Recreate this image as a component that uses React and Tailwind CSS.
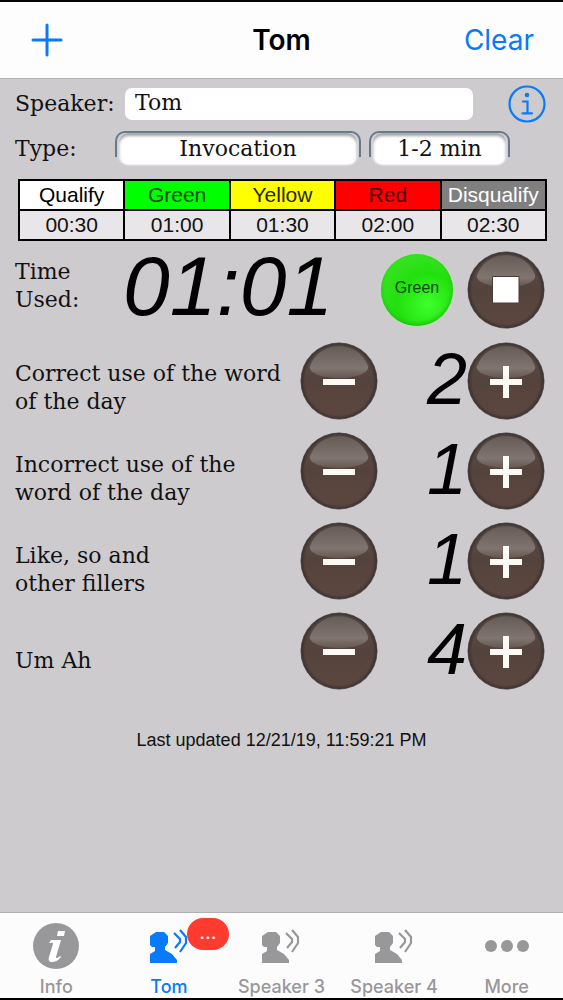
import { useState } from "react";

const limits = [
  { name: "Qualify", time: "00:30", cls: "bg-white text-black" },
  { name: "Green", time: "01:00", cls: "bg-[#00ff00] text-[#0a4a0a]" },
  { name: "Yellow", time: "01:30", cls: "bg-[#ffff00] text-[#26260a]" },
  { name: "Red", time: "02:00", cls: "bg-[#ff0000] text-[#4a0505]" },
  { name: "Disqualify", time: "02:30", cls: "bg-[#7f7f7f] text-white" },
];

const counters = [
  { id: "correct", label: ["Correct use of the word", "of the day"], start: 2 },
  { id: "incorrect", label: ["Incorrect use of the", "word of the day"], start: 1 },
  { id: "fillers", label: ["Like, so and", "other fillers"], start: 1 },
  { id: "umah", label: ["Um Ah"], start: 4 },
];

function GlossyButton({ icon, label, onClick }) {
  return (
    <button type="button" aria-label={label} onClick={onClick} className="block size-[78px] shrink-0">
      <svg viewBox="0 0 78 78" className="size-full">
        <defs>
          <linearGradient id="ball" x1="0" y1="0" x2="0" y2="1">
            <stop offset="0" stopColor="#5a4e48" />
            <stop offset="0.5" stopColor="#54433c" />
            <stop offset="1" stopColor="#5c4740" />
          </linearGradient>
          <linearGradient id="shine" x1="0" y1="0" x2="0" y2="1">
            <stop offset="0" stopColor="#fff" stopOpacity="0.08" />
            <stop offset="0.7" stopColor="#fff" stopOpacity="0.25" />
            <stop offset="1" stopColor="#fff" stopOpacity="0.1" />
          </linearGradient>
          <radialGradient id="rim">
            <stop offset="0.88" stopColor="#2e2828" stopOpacity="0" />
            <stop offset="1" stopColor="#2e2828" stopOpacity="0.8" />
          </radialGradient>
        </defs>
        <circle cx="39" cy="39" r="38" fill="url(#ball)" />
        <path d="M10 24C15 11 26 4 39 4s24 7 29 20c2 7-12 12-29 12S8 31 10 24z" fill="url(#shine)" />
        <circle cx="39" cy="39" r="38.5" fill="url(#rim)" />
        {icon === "stop" && <path d="M25.500 25.500h26.500v26.500h-26.500z" fill="#fff" stroke="#4a3b35" strokeWidth="1" />}
        {icon === "minus" && <path d="M23 40h32" stroke="#fdf9f4" strokeWidth="6" />}
        {icon === "plus" && <path d="M23 40h32M39 24v32" stroke="#fdf9f4" strokeWidth="6" />}
      </svg>
    </button>
  );
}

function PickerField({ id, label, value, className }) {
  return (
    <div className={`h-[26px] rounded-t-[10px] border-2 border-b-0 border-[#66788a] px-[2px] ${className}`}>
      <select
        id={id}
        aria-label={label}
        defaultValue={value}
        className="block h-[31px] w-full appearance-none rounded-[9px] bg-white text-center [text-align-last:center] shadow-[inset_0_3px_3px_#a5a5a8,0_1px_2px_#ffffff]"
      >
        <option>{value}</option>
      </select>
    </div>
  );
}

function SpeakerIcon() {
  return (
    <svg viewBox="0 0 40 36" className="h-[36px] w-[40px]" fill="currentColor">
      <path d="M7 4h8l4 4v7l-3 4v3l7 4 5 6v3H1V26l5-3v-4H3l-2-2V8z" />
      <path d="M25 5l6 6v3l-5 6M31 2l6 7v6l-6 9" fill="none" stroke="currentColor" strokeWidth="2.200" />
    </svg>
  );
}

function Tab({ label, active, badge, children }) {
  return (
    <button
      type="button"
      className={`flex min-w-0 flex-1 flex-col items-center ${active ? "text-[#087afa]" : "text-[#98979a]"}`}
    >
      <span className="relative flex h-[66px] items-center">
        {children}
        {badge && (
          <span className="absolute top-[5px] left-[38px] flex h-8 w-[42px] items-center justify-center rounded-full bg-[#ff3b30] pb-1 text-xl text-white">
            {badge}
          </span>
        )}
      </span>
      <span className="text-lg leading-4 font-medium">{label}</span>
    </button>
  );
}

export default function App() {
  const [counts, setCounts] = useState(counters.map((c) => c.start));

  const step = (index, by) =>
    setCounts(counts.map((n, i) => (i === index ? Math.max(0, n + by) : n)));

  return (
    <div className="flex min-h-screen flex-col border-y-2 border-t-[#050505] border-b-black bg-[#cecbcf] font-['DejaVu_Serif',serif] text-[22px] leading-7 text-[#111]">
      <header className="grid h-[77px] grid-cols-3 items-center border-b border-[#b5b3b6] bg-[#fefdfe] px-[29px] font-['Inter',sans-serif] text-[28px]">
        <button type="button" aria-label="Add speaker" className="justify-self-start text-[#087afa]">
          <svg viewBox="0 0 36 36" className="size-9" stroke="currentColor" strokeWidth="3" strokeLinecap="round">
            <path d="M4 18h28M18 3v30" />
          </svg>
        </button>
        <h1 className="text-center font-semibold text-black">Tom</h1>
        <button type="button" className="justify-self-end text-[#087afa]">Clear</button>
      </header>

      <main className="flex-1">
        <div className="mt-[6px] flex h-[38px] items-center pr-[17px] pl-[15px]">
          <label htmlFor="speaker" className="w-[110px] shrink-0">Speaker:</label>
          <input id="speaker" defaultValue="Tom" className="h-8 min-w-0 flex-1 rounded-[7px] bg-white px-[10px] pb-1" />
          <button type="button" aria-label="Speaker info" className="ml-[35px] shrink-0 text-[#087afa]">
            <svg viewBox="0 0 38 38" className="size-[38px]" fill="none" stroke="currentColor" strokeWidth="2.2">
              <circle cx="19" cy="19" r="17.5" />
              <path d="M15 16.500h4.500V28M14.500 28.300h9.500" strokeLinecap="round" />
              <circle cx="19" cy="10" r="2.3" fill="currentColor" stroke="none" />
            </svg>
          </button>
        </div>

        <div className="mt-2 flex h-[33px] items-start pr-[53px] pl-[15px]">
          <label htmlFor="type" className="w-[100px] shrink-0 pt-1">Type:</label>
          <PickerField id="type" label="Type" value="Invocation" className="mr-2 min-w-0 flex-1" />
          <PickerField id="duration" label="Duration" value="1-2 min" className="w-[141px]" />
        </div>

        <div className="mt-[15px] pr-4 pl-[18px] font-['Liberation_Sans',sans-serif] text-[21px]">
          <table className="w-full table-fixed border-collapse text-center">
            <thead>
              <tr>
                {limits.map((l) => (
                  <th key={l.name} className={`h-[30px] border-2 border-black p-0 font-normal ${l.cls}`}>{l.name}</th>
                ))}
              </tr>
            </thead>
            <tbody>
              <tr>
                {limits.map((l) => (
                  <td key={l.name} className="h-[30px] border-2 border-black bg-[#e8e6e8] p-0">{l.time}</td>
                ))}
              </tr>
            </tbody>
          </table>
        </div>

        <div className="mt-[10px] flex h-[78px] items-center pr-[18px] pl-[15px]">
          <div className="w-[108px] shrink-0 pb-2">Time<br />Used:</div>
          <output className="flex-1 pb-2 font-['Liberation_Sans',sans-serif] text-[84px] leading-[72px] text-black italic">
            01:01
          </output>
          <div className="mr-[14px] flex size-[72px] shrink-0 items-center justify-center rounded-full bg-[radial-gradient(circle_at_65%_70%,#3dff2a,#22e00d_45%,#37e222_75%,#55f040)] pb-1 font-['Liberation_Sans',sans-serif] text-base text-[#0a4a0a] shadow-[0_0_3px_#b8e0b2,inset_0_-2px_4px_#19c40a]">
            Green
          </div>
          <GlossyButton icon="stop" label="Stop timer" />
        </div>

        <div className="mt-[13px] flex pr-[18px] pl-[15px]">
          <div className="min-w-0 flex-1">
            {counters.map((c) => (
              <div key={c.id} id={c.id} className="flex h-[91px] flex-col justify-center whitespace-nowrap">
                {c.label.map((line) => (
                  <span key={line}>{line}</span>
                ))}
              </div>
            ))}
          </div>
          <div className="flex flex-col gap-3">
            {counters.map((c, i) => (
              <div key={c.id} role="group" aria-labelledby={c.id} className="flex items-center">
                <GlossyButton icon="minus" label="Decrease" onClick={() => step(i, -1)} />
                <output className="w-[89px] pb-1 text-right font-['Liberation_Sans',sans-serif] text-7xl leading-[72px] text-black italic">
                  {counts[i]}
                </output>
                <GlossyButton icon="plus" label="Increase" onClick={() => step(i, 1)} />
              </div>
            ))}
          </div>
        </div>

        <p className="mt-5 text-center font-['Liberation_Sans',sans-serif] text-[18px]">
          Last updated 12/21/19, 11:59:21 PM
        </p>
      </main>

      <nav className="flex h-[86px] border-t border-[#b0aeb1] bg-[#fdfcfd] font-['Inter',sans-serif]">
        <Tab label="Info">
          <svg viewBox="0 0 46 46" className="size-[46px]">
            <circle cx="23" cy="23" r="23" fill="#98979a" />
            <path d="M25 8h7l-1 5h-7z" fill="#fff" />
            <path d="M18 17h10l-5 17c0 2 2 1 4-1l1 1c-3 4-6 5-9 5-3 0-4-2-3-5l4-13c0-2-2-1-4-1z" fill="#fff" />
          </svg>
        </Tab>
        <Tab label="Tom" active badge="..."><SpeakerIcon /></Tab>
        <Tab label="Speaker 3"><SpeakerIcon /></Tab>
        <Tab label="Speaker 4"><SpeakerIcon /></Tab>
        <Tab label="More">
          <svg viewBox="0 0 44 12" className="h-3 w-11" fill="currentColor">
            <circle cx="6" cy="6" r="6" />
            <circle cx="22" cy="6" r="6" />
            <circle cx="38" cy="6" r="6" />
          </svg>
        </Tab>
      </nav>
    </div>
  );
}
